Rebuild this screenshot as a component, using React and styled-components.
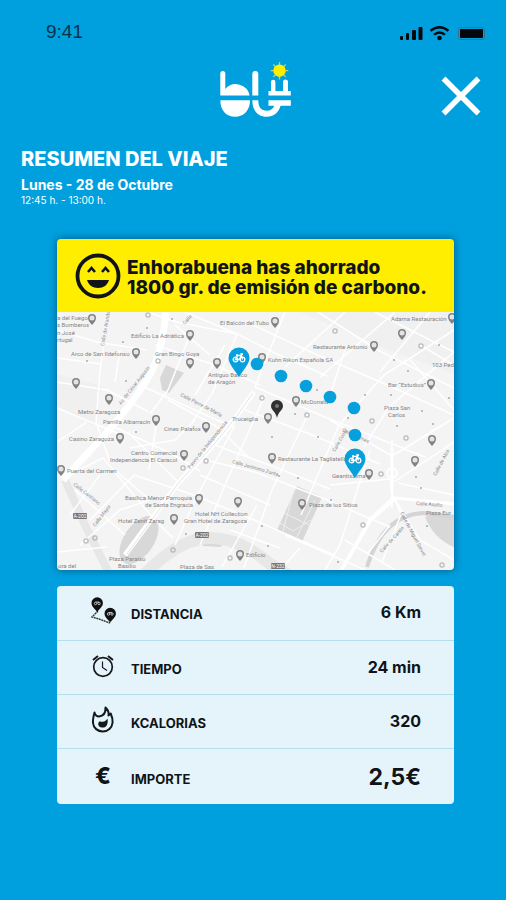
import React from "react";
import styled, { createGlobalStyle } from "styled-components";

const GlobalStyle = createGlobalStyle`
  * { box-sizing: border-box; }
  body {
    margin: 0;
    background: #00a0df;
    font-family: Inter, "Open Sans", sans-serif;
  }
`;

const Screen = styled.div`
  min-height: 100vh;
  padding: 20px 21px 96px;
  background: #00a0df;
  color: #101418;
`;

const StatusBar = styled.div`
  display: flex;
  align-items: center;
  justify-content: space-between;
  height: 24px;
  padding-left: 25px;
`;

const Clock = styled.time`
  font: 19px/24px "Liberation Sans", sans-serif;
  color: #08344a;
`;

const Header = styled.header`
  display: grid;
  grid-template-columns: 1fr auto 1fr;
  align-items: center;
  height: 72px;
  margin-top: 12px;
`;

const LogoBox = styled.div`
  grid-column: 2;
  margin-bottom: 4px;
  padding-left: 5px;
  svg { display: block; }
`;

const CloseButton = styled.button`
  grid-column: 3;
  justify-self: end;
  margin: 8px 4px 0 0;
  padding: 0;
  border: 0;
  background: none;
  cursor: pointer;
  svg { display: block; }
`;

const Intro = styled.section`
  margin-top: 18px;
  color: #fff;
`;

const Title = styled.h1`
  margin: 0;
  font-size: 20px;
  line-height: 26px;
  font-weight: 800;
`;

const TripDate = styled.p`
  margin: 4px 0 0;
  font-size: 14px;
  line-height: 17px;
  font-weight: 700;
`;

const TripHours = styled.p`
  margin: 0;
  font-size: 10px;
  line-height: 15px;
`;

const Cards = styled.main`
  display: grid;
  gap: 16px;
  margin: 31px 31px 0 36px;
`;

const MapCard = styled.section`
  overflow: hidden;
  border-radius: 4px;
  box-shadow: 0 0 8px rgba(0, 40, 70, 0.6);
`;

const Banner = styled.div`
  display: flex;
  align-items: center;
  gap: 6px;
  height: 73px;
  padding-left: 18px;
  background: #ffee00;
  svg { flex: none; }
`;

const BannerText = styled.p`
  margin: 4px 0 0;
  font-size: 19px;
  line-height: 20px;
  font-weight: 800;
`;

const MapArt = styled.svg`
  display: block;
  width: 100%;
  height: auto;
  background: #f4f4f4;
`;

const Stats = styled.dl`
  margin: 0;
  overflow: hidden;
  border-radius: 4px;
  background: #e5f4fb;
`;

const StatRow = styled.div`
  display: grid;
  grid-template-columns: 50px 1fr auto;
  align-items: center;
  height: 54px;
  padding: 0 33px 0 24px;
  & + & { border-top: 1px solid #b5dfee; }
  &:last-child { height: 56px; padding-top: 2px; }
`;

const StatIcon = styled.span`
  display: flex;
  justify-content: center;
  width: 44px;
  margin-bottom: 4px;
`;

const StatLabel = styled.dt`
  margin-top: 2px;
  font-size: 13px;
  line-height: 16px;
  font-weight: 700;
`;

const StatValue = styled.dd`
  margin: 0 0 2px;
  font-size: ${(p) => (p.$large ? 23 : 16)}px;
  line-height: 26px;
  font-weight: 700;
`;

function StatusIcons() {
  return (
    <svg width="88" height="20" viewBox="398 20 88 20" aria-hidden="true">
      <g fill="#02080c">
        <rect x="401" y="34" width="3" height="4" rx="1" />
        <rect x="407" y="31" width="3" height="7" rx="1" />
        <rect x="413" y="28" width="4" height="10" rx="1" />
        <rect x="419.500" y="25" width="4" height="13" rx="1" />
        <circle cx="440.500" cy="36" r="2.300" />
        <rect x="461" y="27" width="23" height="9" rx="1" />
      </g>
      <rect x="459.500" y="25.500" width="26" height="12" rx="2.500" fill="none" stroke="#2c7694" />
      <g fill="none" stroke="#02080c" strokeWidth="2.400">
        <path d="M431.500 28.800q9-7 18 0" />
        <path d="M435 32.600q5.500-4.400 11 0" />
      </g>
    </svg>
  );
}

function Logo() {
  return (
    <svg width="74" height="58" viewBox="219 61 74 58" role="img" aria-label="blü">
      <g fill="#fff">
        <path d="M220.300 95.500V73.500a2.500 2.500 0 0 1 5 0V89a14 14 0 0 1 24.300 6.500z" />
        <path d="M220.300 100.300h29.700c0 10-6 16.500-15 16.500s-14.700-6.500-14.700-16.500z" />
        <path d="M252.300 95.500V74a3 3 0 0 1 6 0v21.500z" />
        <path d="M268.500 95.500V91h2.500v-9a2.200 2.200 0 0 1 4.400 0v9h7.600v-9a2.500 2.500 0 0 1 5 0v9h2.800v4.500z" />
        <path d="M252.300 100.300h6c0 7 3 10.500 8.500 10.500 3.500 0 6-1.500 7.500-5h-5.800v-5.500h22.300v5.500h-10.200c-2.300 7-6.800 11-13.800 11-9 0-14.500-6.500-14.500-16.500z" />
      </g>
      <g stroke="#c5cf6a" strokeWidth="1.300">
        <path d="M279.500 62v17.500M270.700 70.700h17.600M273.300 64.500l12.400 12.400M285.700 64.500l-12.400 12.400" />
      </g>
      <circle cx="279.500" cy="70.700" r="6.200" fill="#ffee00" />
    </svg>
  );
}

function Smile() {
  return (
    <svg width="46" height="46" viewBox="0 0 46 46" aria-hidden="true">
      <circle cx="23" cy="23" r="20.500" fill="none" stroke="#101418" strokeWidth="3.800" />
      <path d="M13 19l3.500-4 3.500 4M27 19l3.500-4 3.500 4" fill="none" stroke="#101418" strokeWidth="2.600" />
      <path d="M12 27h22c-1.500 5-5.500 8-11 8s-9.500-3-11-8z" fill="#101418" />
    </svg>
  );
}

const streets = [
  "M57 330l40 12 50 8M108 312l-8 60-4 50 14 40M57 382l50 8 42 22M57 408l60 25M147 312l30 10 60 12",
  "M155 345l60 20 45 20M140 385l70 32 24 10M188 340l-20 50-18 24M225 345l-30 50M237 334l-25 60-20 28",
  "M110 425l60 28 30 18M157 420l-8 50M128 432l50 50M130 448l45-8 20-20M63 478l40-20 50 60 20 20M100 475l-30 40",
  "M90 520l44-45 60 20 60 25 80 35M57 552l50-5M80 545l40-35 30-10M75 490l50 45M150 500l-35-30",
  "M205 460l50 12 65 25 70 30M200 475l70 30M215 445l65 24 50 20M245 410l65 24 70 30M235 425l-40 75-20 45",
  "M285 312l-30 75 70 30 100 40M253 325l60 28 70 30 71 32M265 395l-40 90-25 60M310 410l-38 80-28 78",
  "M345 312l-60 55M318 312l60 38 76 38M375 312l79 40M454 330l-70 45-45 50-38 90M430 312l-50 60M454 352l-65 55-25 40",
  "M395 312l-75 65M345 350l-15 45M410 360l44 50M420 345l34 20M330 420l62 36v52M392 456l62-38M454 442l-60 40",
  "M392 440l-1 50 10 24M398 483l56 12M330 485l60-6M300 548l-20 22M285 535l80 35M230 530l50 18M257 505l-35 62",
  "M370 450l-30 95-15 25M454 503l-62-5-22 20-30 52M395 500l25 40 34 20M390 525l-22 28M345 540l50 30M402 512l-20 50",
  "M57 358l44 6M120 350l-5 32M168 400l50 27 30 30M175 325l35 30M57 442l30-20M185 312l52 22 40 20 50 22",
];

const labels = [
  [57, 320, "a del Fuego"], [57, 327, "s Bomberos"], [57, 335, "n José"], [57, 342, "rtugal"],
  [131, 338, "Edificio La Adriática"], [71, 356, "Arco de San Ildefonso"],
  [155, 356, "Gran Bingo Goya"], [208, 377, "Antiguo Banco"], [208, 384, "de Aragón"],
  [78, 414, "Metro Zaragoza"], [103, 424, "Parrilla Albarracín"], [69, 441, "Casino Zaragoza"],
  [164, 431, "Cines Palafox"], [131, 455, "Centro Comercial"], [110, 462, "Independencia El Caracol"],
  [67, 473, "Puerta del Carmen"], [125, 500, "Basílica Menor Parroquia"], [145, 507, "de Santa Engracia"],
  [195, 516, "Hotel NH Collection"], [184, 523, "Gran Hotel de Zaragoza"], [118, 523, "Hotel Zenit Zarag"],
  [109, 561, "Plaza Paraíso"], [118, 568, "Basilio"], [180, 569, "Plaza de Sas"], [58, 568, "ora del"],
  [220, 325, "El Balcón del Tubo"], [391, 321, "Adama Restauración"], [313, 349, "Restaurante Antonio"],
  [268, 362, "Kuhn Rikon Española SA"], [432, 367, "103 Ped"], [388, 387, "Bar “Estudios”"],
  [301, 404, "McDonald"], [384, 410, "Plaza San"], [388, 417, "Carlos"], [232, 421, "Truceiglia"],
  [278, 461, "Restaurante La Tagliatella"], [332, 478, "Geantissima"], [309, 507, "Plaza de los Sitios"],
  [426, 515, "Plaza Eur"], [246, 557, "Edificio"],
];

const streetNames = [
  [104, 346, -80, "Calle de Aranda"], [121, 405, -52, "Av. de César Augusto"], [180, 396, 27, "Calle Pierre de María"],
  [190, 469, -51, "Paseo de la Independencia"], [73, 485, 38, "Calle Canfranc"], [95, 527, -52, "Calle Mayor"],
  [232, 463, 16, "Calle Jerónimo Zurita"], [335, 452, -60, "Calle Costa"], [342, 431, 25, "Calle Balmes"],
  [416, 505, 4, "Calle Asalto"], [400, 513, 62, "Calle de Miguel Servet"], [382, 553, -48, "Calle de Cantín"],
  [436, 476, -62, "Calle de Alca"], [185, 325, -50, "Calle"],
];

const greyPins = [
  [92, 319], [190, 335], [136, 353], [190, 363], [217, 363], [76, 383], [109, 399], [156, 420], [120, 438],
  [206, 427], [184, 455], [61, 470], [199, 499], [238, 502], [174, 519], [240, 555], [275, 322], [452, 318],
  [374, 346], [402, 334], [262, 358], [431, 384], [296, 401], [268, 418], [272, 458], [369, 474], [432, 440],
  [415, 461], [302, 504],
];

const stops = [
  [148, 315], [158, 361], [335, 331], [421, 346], [262, 398], [183, 468], [206, 461], [86, 541], [95, 538],
  [173, 550], [230, 558], [307, 415], [372, 421], [406, 438], [381, 474], [363, 525], [442, 565],
];

const specks = [
  [147, 328], [123, 342], [87, 361], [126, 381], [172, 319], [136, 432], [186, 534], [394, 360], [408, 371], [439, 345],
  [317, 390], [365, 395], [391, 395], [422, 411], [433, 424], [348, 418], [397, 426], [318, 437], [295, 414],
  [272, 437], [279, 476], [298, 478], [331, 500], [416, 477], [421, 488], [427, 526], [262, 526], [268, 546], [338, 562], [449, 398],
];

const dots = [[257, 364], [281, 376], [306, 386], [330, 397], [354, 408], [355, 435]];

const bikePins = [[239, 358], [355, 459]];

function RouteMap() {
  return (
    <MapArt viewBox="57 312 397 258" role="img" aria-label="Mapa del recorrido">
      <path d="M57 374l45 12-8 40-37-20zM300 312h154v62l-60-22z" fill="#f0f0f0" />
      <g fill="#d8d8d8">
        <path d="M166 365l18 8-15 20-7-3-2-12zM297 486l25 11-20 45-25-12z" />
        <path d="M425 517l10-5 19 4v31q-20-8-29-30z" />
        <ellipse cx="139" cy="540" rx="15" ry="27" transform="rotate(34 139 540)" />
        <path d="M200 535l25 3-4 9-18-1z" />
      </g>
      <g fill="none" stroke="#e7e7e7">
        <path d="M65 480l20 45 25 50" strokeWidth="8" />
        <path d="M145 574q35-36 65-36t60 26l20 12" strokeWidth="12" />
      </g>
      <path d="M367 567q16-52 56-54l32 4" fill="none" stroke="#d4d4d4" strokeWidth="4" />
      <g fill="none" stroke="#fff">
        {streets.map((d) => <path key={d} d={d} strokeWidth="1.500" />)}
        <path d="M166 312q-5 50-22 72-12 20-42 54l-39 42" strokeWidth="7" />
        <path d="M254 392q-30 45-75 90l-54 73" strokeWidth="5" />
        <path d="M392 492v-44M454 504l-58-6-25 22-29 50" strokeWidth="3" />
        <circle cx="392" cy="473" r="5" strokeWidth="2" />
      </g>
      <path d="M253 393q-30 45-73 88l-53 73" fill="none" stroke="#e4e4e4" />
      <path d="M284 513l25 12M293 493l-10 38M315 500l-18 37M280 523l13 8 20-12" fill="none" stroke="#eee" />
      <g fontFamily="Roboto, sans-serif" fontSize="6" fill="#858585">
        {labels.map(([x, y, text]) => <text key={text + y} x={x} y={y}>{text}</text>)}
      </g>
      <g fontFamily="Roboto, sans-serif" fontSize="5" fill="#8c8c8c">
        {streetNames.map(([x, y, angle, text]) => (
          <text key={text} transform={`translate(${x} ${y}) rotate(${angle})`}>{text}</text>
        ))}
      </g>
      <g fill="none" stroke="#a6a6a6">
        {stops.map(([x, y]) => <rect key={`${x}-${y}`} x={x - 2} y={y - 2} width="4" height="4" rx="1" />)}
      </g>
      <g fill="#aaa">
        {specks.map(([x, y]) => <circle key={`${x}-${y}`} cx={x} cy={y} r="1" />)}
      </g>
      <g fill="#777">
        <rect x="73" y="513" width="14" height="6" rx="1" />
        <rect x="195" y="532" width="14" height="6" rx="1" />
        <rect x="271" y="563" width="14" height="6" rx="1" />
      </g>
      <g fontFamily="Roboto, sans-serif" fontSize="5" fill="#fff" textAnchor="middle">
        <text x="80" y="518">A-202</text>
        <text x="202" y="537">A-202</text>
        <text x="278" y="568">N-232</text>
      </g>
      {greyPins.map(([x, y]) => (
        <g key={`${x}-${y}`}>
          <path d={`M${x - 4} ${y - 1}a4 4 0 0 1 8 0q0 3-4 7-4-4-4-7z`} fill="#828282" />
          <circle cx={x} cy={y - 1} r="2.500" fill="#e4e4e4" />
        </g>
      ))}
      <path d="M271 406a6 6 0 0 1 12 0c0 4-5 6-6 12-1-6-6-8-6-12z" fill="#303030" />
      <circle cx="277" cy="406" r="2" fill="#777" />
      <g fill="#08a0dc">
        {dots.map(([x, y]) => <circle key={`${x}-${y}`} cx={x} cy={y} r="6.300" />)}
      </g>
      {bikePins.map(([x, y]) => (
        <g key={x} transform={`translate(${x} ${y})`}>
          <path d="M-10.500 0a10.500 10.500 0 0 1 21 0C10.500 6 4 12 0 19-4 12-10.500 6-10.500 0z" fill="#08a0dc" />
          <g fill="none" stroke="#fff" strokeWidth="1.300">
            <circle cx="-3.500" cy="1.500" r="2.300" />
            <circle cx="3.500" cy="1.500" r="2.300" />
            <path d="M-3.500 1.500l2-4h4l-2.500 4zM-3-3h2M3.500 1.500L2-4h2" />
          </g>
        </g>
      ))}
    </MapArt>
  );
}

function RouteIcon() {
  return (
    <svg width="28" height="30" viewBox="0 0 28 30" aria-hidden="true">
      <path d="M9 15l-6 6 7 2 11 4" fill="none" stroke="#333" strokeWidth="1.400" strokeDasharray="2 .6" />
      <g fill="#111">
        <path d="M2.500 7a5.700 5.700 0 0 1 11.400 0c0 4-4 6-5.700 9C6.500 13 2.500 11 2.500 7z" />
        <path d="M15.500 17.500a5.700 5.700 0 0 1 11.400 0c0 4-4 6-5.700 9-1.700-3-5.700-5-5.700-9z" />
      </g>
      <g fill="none" stroke="#d7e5eb" strokeWidth=".8">
        <circle cx="6.500" cy="7.500" r="1.200" /><circle cx="10" cy="7.500" r="1.200" />
        <path d="M6.500 6h3.500" />
        <circle cx="19.500" cy="18" r="1.200" /><circle cx="23" cy="18" r="1.200" />
        <path d="M19.500 16.500H23" />
      </g>
    </svg>
  );
}

function ClockIcon() {
  return (
    <svg width="24" height="24" viewBox="0 0 24 24" fill="none" stroke="#15191c" aria-hidden="true">
      <circle cx="12" cy="13" r="9.300" strokeWidth="1.700" />
      <path d="M2 6l5-4M22 6l-5-4" strokeWidth="2" />
      <path d="M11.500 7.500v6l4.500 3" strokeWidth="1.200" />
    </svg>
  );
}

function FlameIcon() {
  return (
    <svg width="24" height="28" viewBox="0 0 24 28" aria-hidden="true">
      <path d="M3.500 6.500c.8 3 2.500 4 4.500 4 4.500-.5 6.700-4 6.500-9 3 2.800 3.500 5.500 3 8l2.200-2c1.500 3.500 2.200 6 1.900 9-.6 5.500-4.600 9-9.800 9S2.500 22 2 17c-.3-3.500.4-6.500 1.500-10.500z" fill="none" stroke="#15191c" strokeWidth="2" strokeLinejoin="round" />
      <path d="M16.500 12.500c1 6-1.300 9.500-5.500 9-4-.5-5-4.300-2.200-6.300 1 .5 2 .8 3 .6 2-.4 3.700-1.300 4.700-3.300z" fill="#15191c" />
    </svg>
  );
}

const EuroIcon = styled.span`
  font-size: 23px;
  line-height: 26px;
  font-weight: 800;
`;

const stats = [
  { label: "DISTANCIA", value: "6 Km", icon: <RouteIcon /> },
  { label: "TIEMPO", value: "24 min", icon: <ClockIcon /> },
  { label: "KCALORIAS", value: "320", icon: <FlameIcon /> },
  { label: "IMPORTE", value: "2,5€", icon: <EuroIcon>€</EuroIcon>, large: true },
];

export default function App() {
  return (
    <Screen>
      <GlobalStyle />
      <StatusBar>
        <Clock>9:41</Clock>
        <StatusIcons />
      </StatusBar>
      <Header>
        <LogoBox><Logo /></LogoBox>
        <CloseButton type="button" aria-label="Cerrar">
          <svg width="40" height="40" viewBox="0 0 40 40" stroke="#fff" strokeWidth="5.500">
            <path d="M2.500 2.500l35 35M37.500 2.500l-35 35" />
          </svg>
        </CloseButton>
      </Header>
      <Intro>
        <Title>RESUMEN DEL VIAJE</Title>
        <TripDate>Lunes - 28 de Octubre</TripDate>
        <TripHours>12:45 h. - 13:00 h.</TripHours>
      </Intro>
      <Cards>
        <MapCard>
          <Banner>
            <Smile />
            <BannerText>
              Enhorabuena has ahorrado<br />
              1800 gr. de emisión de carbono.
            </BannerText>
          </Banner>
          <RouteMap />
        </MapCard>
        <Stats>
          {stats.map((s) => (
            <StatRow key={s.label}>
              <StatIcon>{s.icon}</StatIcon>
              <StatLabel>{s.label}</StatLabel>
              <StatValue $large={s.large}>{s.value}</StatValue>
            </StatRow>
          ))}
        </Stats>
      </Cards>
    </Screen>
  );
}
